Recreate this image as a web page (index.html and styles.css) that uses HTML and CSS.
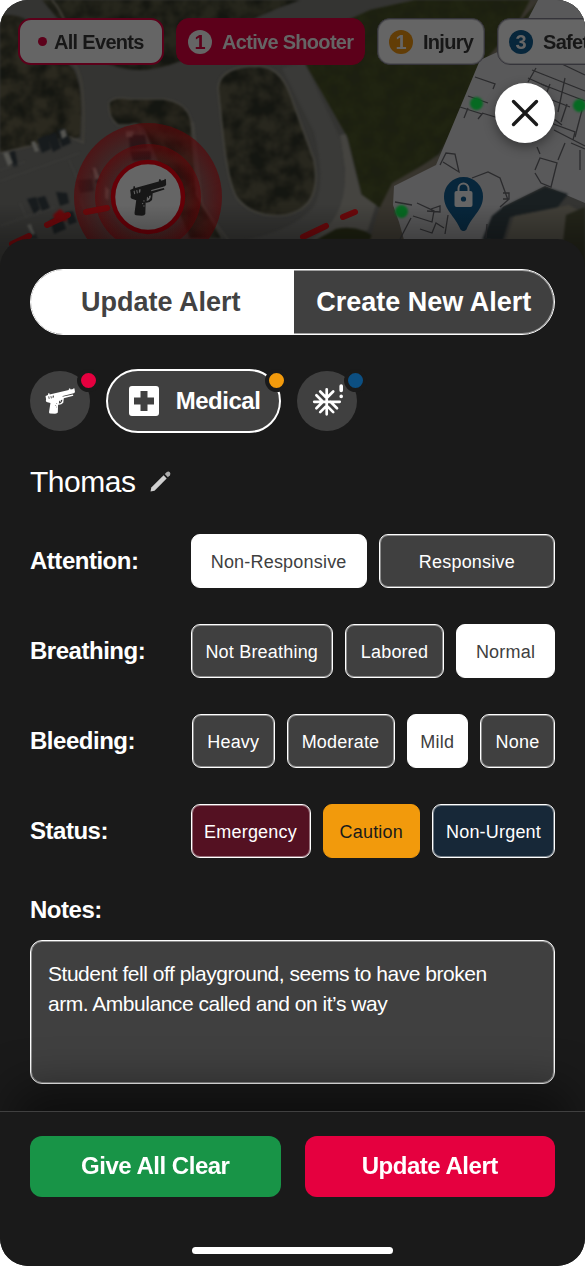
FILE: index.html
```html
<!DOCTYPE html>
<html lang="en">
<head>
<meta charset="utf-8">
<title>Update Alert</title>
<link rel="stylesheet" href="styles.css">
</head>
<body>
<svg class="defs" aria-hidden="true">
  <symbol id="gun" viewBox="389 536 110 112" preserveAspectRatio="none">
    <path d="M391 570 L400 566 L401 559 L405 559 L406 564 L476 545 L477 538 L481 538 L483 543 L493 540 L494 536 L497 538 L499 554 L494 559 L454 570 L453 574 L491 564 L493 569 L458 580 L456 600 Q449 609 437 608 L436 642 Q434 647 426 647 L408 646 Q403 645 404 638 L409 601 L398 597 Q390 596 393 586 Z M441 590 L440 603 Q451 602 453 587 L447 588 L447 596 Z M401 573 L403 583 L406 582 L404 572 Z M409 571 L411 581 L414 580 L412 570 Z M417 569 L417 579 L421 577 L422 568 Z" fill="currentColor" fill-rule="evenodd"/>
    <g class="gun-grip"><circle cx="432" cy="603" r="2"/><circle cx="428" cy="611" r="2"/><circle cx="432" cy="618" r="2"/></g>
  </symbol>
</svg>
<main class="screen">
  <header class="map">
    <svg class="map-art" viewBox="0 0 585 270" aria-hidden="true">
      <defs>
        <filter id="tree" x="0" y="0" width="100%" height="100%" color-interpolation-filters="sRGB">
          <feTurbulence type="fractalNoise" baseFrequency=".06" numOctaves="4" seed="8" result="n"/>
          <feColorMatrix in="n" type="matrix" values="0 0 0 0 .08  0 0 0 0 .085  0 0 0 0 .065  2.6 0 0 0 -.85" result="c"/>
          <feComposite in="c" in2="SourceGraphic" operator="in" result="d"/>
          <feMerge><feMergeNode in="SourceGraphic"/><feMergeNode in="d"/></feMerge>
        </filter>
        <filter id="soft" color-interpolation-filters="sRGB"><feGaussianBlur stdDeviation="1.1"/></filter>
        <filter id="dot" color-interpolation-filters="sRGB"><feGaussianBlur stdDeviation=".8"/></filter>
        <radialGradient id="ringA"><stop offset=".7" stop-color="#5a0508" stop-opacity=".25"/><stop offset="1" stop-color="#5a0508" stop-opacity=".66"/></radialGradient>
        <radialGradient id="ringB"><stop offset=".65" stop-color="#5a0507" stop-opacity=".05"/><stop offset="1" stop-color="#600508" stop-opacity=".65"/></radialGradient>
        <linearGradient id="shade" x1="0" y1="0" x2="0" y2="1"><stop offset="0" stop-color="#000" stop-opacity="0"/><stop offset=".5" stop-color="#000" stop-opacity=".25"/><stop offset="1" stop-color="#000" stop-opacity=".4"/></linearGradient>
      </defs>
      <rect width="585" height="270" fill="#343432"/>
      <g filter="url(#soft)">
        <path d="M0 15Q30 12 45 40L74 70Q84 90 80 137L0 153Z" fill="#2b291f" filter="url(#tree)"/>
        <path d="M42 0H300Q255 15 212 42Q180 68 140 70Q95 70 66 28Z" fill="#26261c" filter="url(#tree)"/>
        <path d="M370 10L415 0H540L488 76L439 154L392 186L386 212L362 195L348 138L305 63L300 42Z" fill="#202411"/>
        <path d="M370 10L415 0H540L488 76L439 154L392 186L386 212L362 195L348 138L305 63L300 42Z" fill="#202411" opacity=".3" filter="url(#tree)"/>
        <path d="M218 88Q220 66 258 66Q280 67 290 94L314 160Q323 207 286 215Q254 219 237 198Q227 181 222 126Z" fill="#28271e" filter="url(#tree)"/>
        <path d="M218 88Q220 66 258 66Q280 67 290 94L314 160Q323 207 286 215Q254 219 237 198Q227 181 222 126Z" fill="none" stroke="#403f39" stroke-width="2"/>
        <path d="M109 103Q113 96 130 99L163 99Q187 102 191 121L197 195L222 238H190L145 130Q140 120 130 125L118 125Q108 118 109 103Z" fill="#28261d" filter="url(#tree)"/>
        <path d="M141 138Q140 120 130 125L118 125Q108 118 109 103Q113 96 130 99L163 99Q187 102 191 121L197 195L222 238" fill="none" stroke="#42403a" stroke-width="1.500"/>
        <path d="M52 0Q70 20 75 65Q86 80 83 142" fill="none" stroke="#3f3d36" stroke-width="2"/>
        <path d="M0 153L70 137L84 143M193 122L202 205L232 245" fill="none" stroke="#44423d" stroke-width="1.500"/>
        <path d="M340 135L346 134L361 194L376 205L368 230L340 240H300Q345 220 345 170Z" fill="#454440"/>
        <path d="M282 68L314 132Q326 180 315 205Q295 230 245 240H310Q346 220 345 175L341 140L304 62Z" fill="#3a3a38"/>
        <path d="M316 240L336 229Q360 224 378 240Z" fill="#1d2010"/>
        <path d="M530 0L490 75L440 155L392 183L378 211L370 240H420L445 165L478 68L512 30L540 0Z" fill="#38352e"/>
      </g>
      <path d="M538 0H585V203L545 186L503 207L490 240H404L399 222L393 205L394 186L436 165L480 60L515 44Z" fill="#59595a"/>
      <g filter="url(#soft)">
        <path d="M503 207L545 187L568 194L557 208L510 217L503 240H482L492 216Z" fill="#191f21"/>
        <path d="M514 216L569 205L585 214V240H506Z" fill="#413f38"/>
        <path d="M566 215L585 207V270H560Z" fill="#24251a"/>
      </g>
      <g fill="none" stroke="#2b2b2d" stroke-width="1.300">
        <path d="M475 77L495 84L493 89M468 96L488 103M460 107L482 114L478 119M468 108L464 118M482 113L502 119M543 55L585 75M536 68L528 82M532 70L585 91M541 84L585 101M550 84L547 92M565 78L558 112M548 122L575 132L573 140M562 125L554 119M554 130L585 146M565 143L558 160M571 143L585 149M580 150V170M537 147L540 154M535 170L540 158L557 163L551 187L541 183L535 173M440 165L446 153L455 154L459 172L443 162M472 178L488 172L500 178L508 200L500 207M417 203L434 211L432 222L413 216M395 202L412 205M431 209L440 206L440 212L427 211M420 229L432 233L436 223L444 228M448 215L445 234M400 239L411 218M487 224L486 238M503 193H509V199H503"/>
        <path d="M528 78L550 88M567 104L561 122M552 100L570 107M582 110L575 137"/>
      </g>
      <g filter="url(#dot)">
        <g fill="#171b1d">
          <path d="M37 139L47 135L51 149L42 153ZM47 136L56 132L61 148L53 152ZM57 130L65 128L71 143L62 147ZM10 152L15 151L18 166L13 167ZM27 199L36 197L40 209L34 214ZM37 198L45 196L50 208L42 211ZM56 192L67 193L69 203L60 206ZM50 220L62 216L66 229L54 234ZM65 212L73 211L77 222L69 225ZM96 166L101 176L97 184L91 170ZM129 135L145 135L147 148L130 150ZM130 151H151V160L133 161Z"/>
          <path d="M32 225L38 239H28ZM77 180L92 179L94 191L80 193Z" opacity=".7"/>
        </g>
        <g fill="#555551">
          <path d="M3 153L8 152L13 163L8 166ZM31 142L35 141L39 151L35 152ZM60 131L65 129L67 136L62 139ZM92 168L96 167L100 178L95 180ZM27 225L31 224L35 234L32 235ZM126 131L134 131L132 137L126 137ZM105 186L109 190L108 200L105 198Z"/>
        </g>
        <g stroke="#4a4a47" stroke-width=".8" opacity=".55"><path d="M0 170L25 162M0 226L55 207M0 181L80 153M20 203L26 217M69 160L80 185M80 198L90 225"/></g>
      </g>
      <g fill="#066a22" filter="url(#dot)"><circle cx="476.500" cy="103.500" r="6.500"/><circle cx="579.500" cy="105.500" r="6.500"/><circle cx="401.500" cy="211.500" r="6.500"/></g>
      <circle cx="148" cy="197" r="74" fill="url(#ringA)"/>
      <circle cx="148" cy="197" r="53" fill="url(#ringB)"/>
      <g stroke="#6b080b" stroke-width="6" stroke-linecap="round" fill="none"><path d="M12 244L29 236M47 225L68 215M86 212L107 208M303 237L326 226M343 217L355 212"/></g>
      <path d="M53 215L60 209L66 214L67 221L55 221Z" fill="#6b080b" filter="url(#dot)"/>
      <circle cx="148" cy="197" r="35" fill="#656565" stroke="#650007" stroke-width="4.500"/>
      <svg class="map-gun" x="129.500" y="178.500" width="37" height="37.500"><use href="#gun" width="37" height="37.500"/></svg>
      <path d="M463.500 177A19.500 19.500 0 0 0 444 196.500C444 210 455 216 460.500 229.500Q463.500 232.500 466.500 229.500C472 216 483 210 483 196.500A19.500 19.500 0 0 0 463.500 177Z" fill="#07263b"/>
      <path d="M458.500 192V188.500A5 5 0 0 1 468.500 188.500V192" fill="none" stroke="#656565" stroke-width="2"/>
      <rect x="454.500" y="191" width="18" height="16" rx="2" fill="#656565"/><circle cx="463.500" cy="199" r="2.600" fill="#07263b"/>
      <rect y="205" width="585" height="65" fill="url(#shade)"/>
    </svg>
    <nav class="chips">
      <div class="chip chip-all"><i class="bullet"></i><span>All Events</span></div>
      <div class="chip chip-active"><b class="count">1</b><span>Active Shooter</span></div>
      <div class="chip chip-injury"><b class="count">1</b><span>Injury</span></div>
      <div class="chip chip-safety"><b class="count">3</b><span>Safety</span></div>
    </nav>
    <button class="close" aria-label="Close"><svg viewBox="0 0 60 60"><path d="M18.500 18.500L41.500 41.500M41.500 18.500L18.500 41.500" stroke="#1a1a1a" stroke-width="3.400" stroke-linecap="round"/></svg></button>
  </header>

  <section class="sheet">
    <div class="tabs"><div class="tab tab-on">Update Alert</div><div class="tab">Create New Alert</div></div>
    <div class="types">
      <div class="type"><svg class="type-gun" width="30" height="26"><use href="#gun" width="30" height="26"/></svg><i class="dot red"></i></div>
      <div class="type type-on"><svg width="30" height="30" viewBox="0 0 30 30"><path fill="#fff" fill-rule="evenodd" d="M3 0H27Q30 0 30 3V27Q30 30 27 30H3Q0 30 0 27V3Q0 0 3 0ZM11.500 5V11.500H5V18.500H11.500V25H18.500V18.500H25V11.500H18.500V5Z"/></svg><span>Medical</span><i class="dot amber"></i></div>
      <div class="type"><svg width="60" height="60" viewBox="0 0 60 60" fill="none" stroke="#fff" stroke-width="2.700" stroke-linecap="round"><path d="M29.700 18.300V43.300M17.200 30.800H42.700M23.200 20.500L29.700 27L36.200 20.500M23.200 41.100L29.700 34.600L36.200 41.100M19.400 24.300L25.900 30.800L19.400 37.300M40 37.300L33.500 30.800"/><path d="M44.200 15V19.500M44.200 25.400V25.500" stroke-width="3.600"/></svg><i class="dot blue"></i></div>
    </div>
    <div class="person"><h1>Thomas</h1><svg width="21" height="21" viewBox="0 0 21 21" fill="#d0d0d0"><path d="M0.500 20.500L1.300 16.500L13.600 4.300L16.700 7.400L4.500 19.700Z"/><path d="M14.800 3.100L16.800 1.100Q18.400 0 19.800 1.200Q21 2.600 19.900 4.200L17.900 6.200Z" opacity=".8"/></svg></div>

    <div class="fields">
      <div class="field"><h2>Attention:</h2><div class="options attention"><button class="opt on">Non-Responsive</button><button class="opt">Responsive</button></div></div>
      <div class="field"><h2>Breathing:</h2><div class="options breathing"><button class="opt">Not Breathing</button><button class="opt">Labored</button><button class="opt on">Normal</button></div></div>
      <div class="field"><h2>Bleeding:</h2><div class="options bleeding"><button class="opt">Heavy</button><button class="opt">Moderate</button><button class="opt on">Mild</button><button class="opt">None</button></div></div>
      <div class="field"><h2>Status:</h2><div class="options status"><button class="opt emergency">Emergency</button><button class="opt caution">Caution</button><button class="opt nonurgent">Non-Urgent</button></div></div>
    </div>
    <h2 class="notes-title">Notes:</h2>
    <div class="notes">Student fell off playground, seems to have broken<br>arm. Ambulance called and on it’s way</div>
  </section>

  <footer class="footer">
    <div class="actions"><button class="action clear">Give All Clear</button><button class="action update">Update Alert</button></div>
    <div class="home"></div>
  </footer>
</main>
</body>
</html>
```

FILE: styles.css
```css
* { box-sizing: border-box; }
body { margin: 0; background: #fff; font-family: "Liberation Sans", Arial, sans-serif; color: #fff; }
button { font: inherit; color: inherit; border: 0; padding: 0; margin: 0; background: none; white-space: nowrap; }
h1, h2 { margin: 0; }
.defs { position: absolute; width: 0; height: 0; }
.screen { width: 585px; height: 1266px; display: flex; flex-direction: column; background: #1a1a1a; border-radius: 28px; overflow: hidden; }

.map { position: relative; height: 238.5px; flex: none; }
.map-art { position: absolute; left: 0; top: 0; width: 585px; height: 270px; }
.map-gun { color: #171717; }
.gun-grip { fill: #656565; }
.type-gun .gun-grip { fill: #404040; }
.chips { position: relative; display: flex; gap: 12px; padding: 18px 0 0 18px; overflow: hidden; font-size: 20px; font-weight: 700; letter-spacing: -.7px; color: #171717; }
.chip { flex: none; display: flex; align-items: center; height: 47px; border: 1.5px solid #35343a; border-radius: 13px; background: #656565; box-shadow: inset 0 0 0 1px rgba(53,52,58,.4); white-space: nowrap; }
.chip-all { width: 146px; padding-left: 18px; gap: 7px; border-color: #5c001a; border-width: 2px; box-shadow: none; }
.bullet { width: 9px; height: 9px; border-radius: 50%; background: #5c001a; }
.chip-active { width: 189px; padding-left: 11px; gap: 10px; background: #5c001a; border-color: #5c001a; box-shadow: none; color: #656565; }
.chip-injury { width: 108px; padding-left: 11px; gap: 10px; }
.chip-safety { width: 140px; padding-left: 11px; gap: 10px; }
.chip span { padding-top: 1px; }
.count { width: 24px; height: 24px; border-radius: 50%; text-align: center; line-height: 25px; letter-spacing: 0; color: #656565; }
.chip-active .count { background: #656565; color: #5c001a; }
.chip-injury .count { background: #623d06; }
.chip-safety .count { background: #07263b; }
.close { position: absolute; left: 495px; top: 82.5px; width: 60px; height: 60px; border-radius: 50%; background: #fff; box-shadow: 0 4px 12px rgba(0,0,0,.4); }
.close svg { display: block; }

.sheet { position: relative; flex: 1; padding: 30px 30px 0; background: #1a1a1a; border-radius: 28px 28px 0 0; }
.tabs { display: flex; height: 66px; border: 1.5px solid #fff; border-radius: 33px; overflow: hidden; background: #404040; box-shadow: inset 0 0 0 1px rgba(255,255,255,.5); font-size: 27px; font-weight: 700; }
.tab { flex: 1; display: flex; align-items: center; justify-content: center; padding-top: 1px; white-space: nowrap; }
.tab-on { flex: 0 0 262.5px; padding-right: 3px; background: #fff; color: #424242; }
.types { display: flex; align-items: center; gap: 16px; height: 64px; margin-top: 34px; }
.type { position: relative; width: 60px; height: 60px; border-radius: 50%; background: #404040; display: flex; align-items: center; justify-content: center; }
.type-on { width: 175px; height: 64px; border: 2px solid #fff; border-radius: 32px; gap: 17px; padding-left: 2px; font-size: 24px; font-weight: 700; letter-spacing: -.48px; }
.dot { position: absolute; right: -10px; top: -2px; width: 23px; height: 23px; border: 4px solid #1a1a1a; border-radius: 50%; }
.type-on .dot { right: -9px; top: -2px; }
.red { background: #e5003f; }
.amber { background: #f29a0c; }
.blue { background: #0c4f82; }
.person { display: flex; align-items: center; gap: 14px; height: 36px; margin-top: 31px; }
h1 { font-size: 30px; font-weight: 400; letter-spacing: -.48px; line-height: 36px; }
.fields { display: flex; flex-direction: column; gap: 36px; margin-top: 34px; }
.field { display: flex; align-items: center; justify-content: space-between; height: 54px; }
h2 { font-size: 24px; line-height: 30px; font-weight: 700; letter-spacing: -.48px; }
.options { width: 364.5px; height: 54px; display: grid; gap: 12px; }
.attention { grid-template-columns: 1fr 1fr; }
.breathing { grid-template-columns: 142.5px 99px 99px; }
.bleeding { width: 363px; grid-template-columns: 82.5px 108px 61.5px 75px; }
.status { grid-template-columns: 120px 97.5px 123px; }
.opt { height: 54px; padding-top: 3px; border: 1.5px solid #fff; border-radius: 9px; background: #404040; box-shadow: inset 0 0 0 1px rgba(255,255,255,.4); font-size: 18px; letter-spacing: .2px; }
.on { background: #fff; color: #404040; }
.emergency { background: #541122; }
.caution { background: #f29a0c; border-color: #f29a0c; box-shadow: none; color: #1a1a1a; }
.nonurgent { background: #172838; }
.notes-title { margin-top: 37px; }
.notes { height: 144px; margin-top: 15.5px; padding: 17.5px 17px; border: 1.5px solid #fff; border-radius: 12px; background: #404040; box-shadow: inset 0 0 0 1px rgba(255,255,255,.4); font-size: 21px; line-height: 30px; letter-spacing: -.475px; white-space: nowrap; }

.footer { position: relative; height: 155.5px; flex: none; padding: 24px 30px 0; background: #1a1a1a; border-top: 1.5px solid #404040; box-shadow: 0 -36px 48px -14px rgba(0,0,0,.48); }
.actions { display: grid; grid-template-columns: 1fr 1fr; gap: 24px; }
.action { height: 61.5px; border-radius: 12px; font-size: 24px; font-weight: 700; letter-spacing: -.48px; }
.clear { background: #189447; }
.update { background: #e5003f; }
.home { width: 201px; height: 7.5px; margin: 49.5px auto 0; border-radius: 4px; background: #fff; }
```
